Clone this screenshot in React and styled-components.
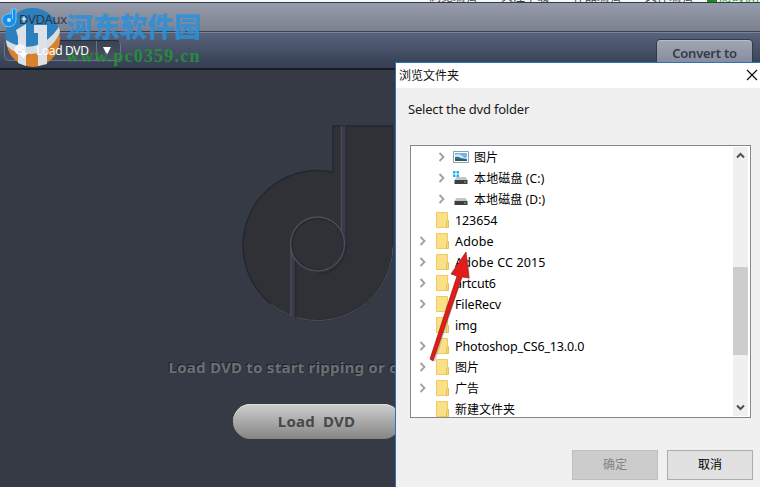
import React from "react";
import styled, { createGlobalStyle } from "styled-components";

const GlobalStyle = createGlobalStyle`
  * {
    box-sizing: border-box;
  }
  body {
    margin: 0;
    overflow: hidden;
    font-family: "Noto Sans", "Noto Sans CJK SC", sans-serif;
  }
`;

const Window = styled.div`
  position: relative;
  width: 760px;
  height: 487px;
  overflow: hidden;
  display: flex;
  flex-direction: column;
  background: #353a44;
`;

const TopStrip = styled.div`
  flex: none;
  display: flex;
  align-items: flex-end;
  gap: 24px;
  height: 2px;
  padding-left: 429px;
  overflow: hidden;
  background: #f4f8f9;
  color: #444;
  font-size: 12px;
  line-height: 14px;
  white-space: nowrap;
`;

const StripItem = styled.span`
  flex: none;
  width: 48px;
  margin-bottom: -2px;
`;

const StripMark = styled.span`
  flex: none;
  width: 60px;
  margin: 0 0 -2px -10px;
  padding-left: 12px;
  color: #12921a;
  background: linear-gradient(to right, #12921a 10px, transparent 10px);
`;

const TitleBar = styled.div`
  flex: none;
  display: flex;
  align-items: center;
  height: 29px;
  padding: 4px 0 0 19px;
  border-top: 1px solid #343a43;
  background: linear-gradient(#969cab, #7c818f);
  color: #252a34;
  font-size: 13px;
  line-height: 18px;
  letter-spacing: -0.3px;
`;

const TitleText = styled.span`
  position: relative;
  z-index: 1;
  opacity: 0.85;
`;

const Toolbar = styled.div`
  flex: none;
  display: flex;
  justify-content: space-between;
  align-items: flex-start;
  height: 39px;
  padding: 7px 7px 0 4px;
  border-top: 1px solid #3a4150;
  border-bottom: 2px solid #191c23;
  box-shadow: inset 0 1px #7a8498;
  background: linear-gradient(#59657d, #343d51);
`;

const LoadMenu = styled.div`
  display: flex;
  align-items: center;
  width: 117px;
  height: 21px;
  margin-top: 1px;
  border: 1px solid #697286;
  border-top-color: #252b38;
  border-radius: 5px;
  background: linear-gradient(#3b4252, #4a5264);
  color: #fff;
  font-size: 12px;
`;

const LoadLabel = styled.span`
  display: flex;
  align-items: center;
  gap: 8px;
  width: 92px;
  padding-left: 8px;
  line-height: 19px;
  letter-spacing: -0.35px;
  white-space: nowrap;
  border-right: 1px solid #697286;

  > * {
    position: relative;
    z-index: 1;
  }
`;

const DownMark = styled.span`
  margin-left: 6px;
  border: 4px solid transparent;
  border-top: 8px solid #fff;
  border-bottom: 0;
`;

const ConvertTab = styled.div`
  width: 97px;
  height: 30px;
  border: 1px solid #333b4b;
  border-radius: 4px 4px 0 0;
  background: linear-gradient(#a1a6b3, #80879a);
  box-shadow: inset 0 1px #b8bcc6;
  color: #343b4a;
  font-size: 13px;
  font-weight: 600;
  line-height: 27px;
  letter-spacing: -0.25px;
  text-align: center;
`;

const Stage = styled.div`
  flex: 1;
  display: flex;
  flex-direction: column;
  align-items: center;
  width: 633px;
  padding-top: 53px;
`;

const Hint = styled.div`
  margin-top: 32px;
  width: 296px;
  color: #6c6f74;
  font-size: 15px;
  font-weight: 700;
  line-height: 24px;
  letter-spacing: 0.25px;
  white-space: nowrap;
  text-shadow: -1px -1px #1d2026;
`;

const LoadButton = styled.div`
  width: 168px;
  height: 35px;
  margin-top: 25px;
  border-radius: 18px;
  background: linear-gradient(#cecece, #858585);
  box-shadow: inset 0 1px #dadada;
  color: #484848;
  font-size: 15px;
  font-weight: 700;
  line-height: 34px;
  letter-spacing: 0.2px;
  text-align: center;
  white-space: pre;
`;

const Watermark = styled.div`
  position: absolute;
  left: 5px;
  top: 8px;
  display: flex;
  gap: 4px;
`;

const WatermarkText = styled.div`
  display: flex;
  flex-direction: column;
  padding-top: 5px;
  white-space: nowrap;
`;

const SiteName = styled.span`
  color: #2b91dc;
  font-size: 27px;
  font-weight: 900;
  line-height: 27px;
  opacity: 0.85;
`;

const SiteUrl = styled.span`
  margin-top: 6px;
  color: #268c3c;
  font-family: "Liberation Serif", serif;
  font-size: 18px;
  font-weight: 700;
  line-height: 20px;
  letter-spacing: 1.2px;
`;

const AppLogo = styled.svg`
  position: absolute;
  left: 1px;
  top: 8px;
`;

const Dialog = styled.div`
  position: absolute;
  z-index: 2;
  left: 395px;
  top: 62px;
  width: 365px;
  height: 425px;
  display: flex;
  flex-direction: column;
  border-top: 1px solid #2b74b8;
  border-left: 1px solid #2b74b8;
  background: #f0f0f0;
  color: #1a1a1a;
`;

const DialogHead = styled.div`
  display: flex;
  justify-content: space-between;
  align-items: center;
  height: 25px;
  padding: 0 2px 2px 3px;
  background: #fff;
  color: #111;
  font-size: 12px;
`;

const Prompt = styled.div`
  margin: 11px 0 0 12px;
  font-size: 13px;
  line-height: 20px;
  letter-spacing: -0.2px;
`;

const Tree = styled.div`
  display: flex;
  width: 341px;
  height: 273px;
  margin: 26px 0 0 14px;
  border: 1px solid #828790;
  background: #fff;
`;

const Rows = styled.div`
  flex: 1;
  height: 271px;
  overflow: hidden;
`;

const Row = styled.div`
  display: flex;
  align-items: center;
  height: 21px;
  padding-left: ${(props) => (props.$nested ? 27 : 8)}px;
  color: #000;
`;

const Label = styled.span`
  padding-top: ${(props) => (props.$cjk ? 0 : 2)}px;
  font-size: ${(props) => (props.$cjk ? 12 : 12.5)}px;
  letter-spacing: ${(props) => props.$spacing || 0}px;
  white-space: nowrap;
`;

const ArrowCell = styled.span`
  display: flex;
  width: ${(props) => (props.$nested ? 15 : 17)}px;
`;

const IconCell = styled.span`
  display: flex;
  width: ${(props) => (props.$nested ? 21 : 19)}px;
`;

const ScrollBar = styled.div`
  display: flex;
  flex-direction: column;
  align-items: center;
  width: 15px;
  height: 269px;
  margin: 1px 2px 0 0;
  background: #f0f0f0;
`;

const ScrollStep = styled.div`
  display: flex;
  align-items: center;
  justify-content: center;
  width: 15px;
  height: 17px;
`;

const Thumb = styled.div`
  width: 15px;
  height: 88px;
  margin: 103px 0 auto;
  background: #cdcdcd;
`;

const Actions = styled.div`
  display: flex;
  justify-content: flex-end;
  gap: 9px;
  padding: 32px 7px 0 0;
`;

const DialogButton = styled.div`
  width: 86px;
  height: 30px;
  border: 1px solid ${(props) => (props.$disabled ? "#bfbfbf" : "#adadad")};
  background: ${(props) => (props.$disabled ? "#cccccc" : "#e1e1e1")};
  color: ${(props) => (props.$disabled ? "#838383" : "#000")};
  font-size: 12px;
  line-height: 27px;
  text-align: center;
`;

const Pointer = styled.svg`
  position: absolute;
  z-index: 3;
  left: 420px;
  top: 245px;
`;

const items = [
  { name: "图片", icon: "picture", nested: true, arrow: true, cjk: true },
  { name: "本地磁盘 (C:)", icon: "system", nested: true, arrow: true, cjk: true, spacing: 0.15 },
  { name: "本地磁盘 (D:)", icon: "disk", nested: true, arrow: true, cjk: true, spacing: 0.1 },
  { name: "123654", spacing: -0.1 },
  { name: "Adobe", arrow: true, spacing: 0.15 },
  { name: "Adobe CC 2015", arrow: true, spacing: 0.15 },
  { name: "artcut6", arrow: true, spacing: -0.2 },
  { name: "FileRecv", arrow: true, spacing: -0.15 },
  { name: "img", spacing: -0.2 },
  { name: "Photoshop_CS6_13.0.0", arrow: true, spacing: -0.15 },
  { name: "图片", arrow: true, cjk: true },
  { name: "广告", arrow: true, cjk: true },
  { name: "新建文件夹", cjk: true },
];

const Chevron = () => (
  <svg width="8" height="10" viewBox="0 0 8 10">
    <path d="M1.500 1l4 4-4 4" fill="none" stroke="#a0a0a0" strokeWidth="1.8" />
  </svg>
);

const Step = ({ down }) => (
  <svg width="9" height="7" viewBox="0 0 9 7">
    <path
      d={down ? "M1 1.500L4.500 5 8 1.500" : "M1 5.500L4.500 2 8 5.500"}
      fill="none"
      stroke="#505050"
      strokeWidth="2"
    />
  </svg>
);

const ItemIcon = ({ type }) => {
  if (type === "picture") {
    return (
      <svg width="16" height="14" viewBox="0 0 16 14">
        <path d="M.5 1.500h15v11H.5z" fill="#fff" stroke="#8ba0b5" />
        <path d="M2 3h12v8H2z" fill="#78b5e6" />
        <path d="M2 5q4-2 7 1t5 1v2H2z" fill="#d7edf5" />
        <path d="M2 7q3-1 6 1l6 1v2H2z" fill="#2f7291" />
        <path d="M2 9q6 0 12 1v1H2z" fill="#315c54" />
      </svg>
    );
  }
  if (type === "system" || type === "disk") {
    return (
      <svg width="16" height="16" viewBox="0 0 16 16">
        {type === "system" && (
          <path
            d="M0 1h2.500v2.500H0zM3.500 1H6v2.500H3.500zM0 4.500h2.500V7H0zM3.500 4.500H6V7H3.500z"
            fill="#16b4e8"
          />
        )}
        <path d="M3.500 7h9l2 3h-13z" fill="#c3c6c8" />
        <path d="M1.500 10h13v4h-13z" fill="#3c4043" />
        <path d="M11 11.500h2v1h-2z" fill="#5cd67b" />
      </svg>
    );
  }
  return (
    <svg width="14" height="16" viewBox="0 0 14 16">
      <path d="M.5.500h11v15H.5z" fill="#fbe08a" stroke="#efcb62" />
      <path d="M10.500 9.500l2-1v7h-2z" fill="#f9da78" stroke="#e5c05a" />
    </svg>
  );
};

const DiscNote = () => (
  <svg width="152" height="200" viewBox="0 0 152 200">
    <path
      d="M92 3h60v121A75 75 0 1 1 92 49z"
      fill="#303136"
      stroke="#222831"
      strokeWidth="1.500"
    />
    <path d="M30 181A75 75 0 0 0 152 124" fill="none" stroke="#50535b" />
    <path d="M105 3v119A28 28 0 0 1 77 151" fill="none" stroke="#242b35" strokeWidth="2" />
    <path d="M103 3v119" stroke="#363d48" strokeWidth="3" />
    <path d="M100.500 3v105" stroke="#4a4d56" strokeWidth="1.500" />
    <path d="M54.500 138v57" stroke="#242b35" strokeWidth="2" />
    <path d="M52 124v71" stroke="#363d48" strokeWidth="3" />
    <path d="M50 122v71" stroke="#4a4d56" strokeWidth="1.500" />
    <circle cx="77" cy="121.500" r="26" fill="#303136" stroke="#242b35" strokeWidth="2" />
    <circle cx="76.500" cy="121" r="27" fill="none" stroke="#4a4d56" strokeWidth="1.500" />
  </svg>
);

const SmallDisc = () => (
  <svg width="15" height="16" viewBox="0 0 15 16">
    <path
      d="M7 1a6 5.500 0 1 0 1 11v-2H5V8h4V6h4A6 5.500 0 0 0 7 1z"
      fill="#f3f5f8"
    />
    <path d="M9 7h3v3h3l-4.500 5L6 10h3z" fill="#fff" />
  </svg>
);

const SiteLogo = () => (
  <svg width="57" height="60" viewBox="0 0 57 60">
    <ellipse cx="28" cy="31" rx="27" ry="28" fill="#d9822e" />
    <path d="M1 34A27 28 0 0 1 54 22Q48 42 24 40 8 39 1 34z" fill="#2d80bd" />
    <path d="M1 32q14 9 28 6T54 19l1 5Q47 44 26 46 9 46 2 38z" fill="#d5dde5" />
    <path d="M11 22l10-6v42l-8-3V29zM29 17h13v39l-9 2V25h-4z" fill="#dce2e8" />
    <path d="M19 7l1 3 3 1-3 1-1 3-1-3-3-1 3-1z" fill="#c8dceb" />
  </svg>
);

const App = () => {
  return (
    <>
      <GlobalStyle />
      <Window>
        <TopStrip>
          <StripItem>浏览编辑</StripItem>
          <StripItem>关注下载</StripItem>
          <StripItem>作品编辑</StripItem>
          <StripItem>文件编辑</StripItem>
          <StripMark>测试软件</StripMark>
        </TopStrip>
        <TitleBar>
          <TitleText>DVDAux</TitleText>
        </TitleBar>
        <Toolbar>
          <LoadMenu>
            <LoadLabel>
              <SmallDisc />
              <span>Load DVD</span>
            </LoadLabel>
            <DownMark />
          </LoadMenu>
          <ConvertTab>Convert to</ConvertTab>
        </Toolbar>
        <Stage>
          <DiscNote />
          <Hint>Load DVD to start ripping or copying</Hint>
          <LoadButton>Load  DVD</LoadButton>
        </Stage>

        <Watermark>
          <SiteLogo />
          <WatermarkText>
            <SiteName>河东软件园</SiteName>
            <SiteUrl>www.pc0359.cn</SiteUrl>
          </WatermarkText>
        </Watermark>
        <AppLogo width="16" height="20" viewBox="0 0 16 20">
          <path
            d="M10 1h5v11a7 6.500 0 1 1-5-6z"
            fill="#168eea"
            stroke="#70c9ff"
          />
          <circle cx="8" cy="12" r="2" fill="#b9e6ff" />
          <path d="M11.500 2v9" stroke="#8bd6ff" />
        </AppLogo>

        <Dialog>
          <DialogHead>
            浏览文件夹
            <svg width="12" height="12" viewBox="0 0 12 12">
              <path d="M1 1l10 10M11 1L1 11" stroke="#111" strokeWidth="1.300" />
            </svg>
          </DialogHead>
          <Prompt>Select the dvd folder</Prompt>
          <Tree>
            <Rows>
              {items.map((item, index) => (
                <Row key={index} $nested={item.nested}>
                  <ArrowCell $nested={item.nested}>
                    {item.arrow && <Chevron />}
                  </ArrowCell>
                  <IconCell $nested={item.nested}>
                    <ItemIcon type={item.icon} />
                  </IconCell>
                  <Label $cjk={item.cjk} $spacing={item.spacing}>
                    {item.name}
                  </Label>
                </Row>
              ))}
            </Rows>
            <ScrollBar>
              <ScrollStep>
                <Step />
              </ScrollStep>
              <Thumb />
              <ScrollStep>
                <Step down />
              </ScrollStep>
            </ScrollBar>
          </Tree>
          <Actions>
            <DialogButton $disabled>确定</DialogButton>
            <DialogButton>取消</DialogButton>
          </Actions>
        </Dialog>

        <Pointer width="60" height="122" viewBox="0 0 60 122">
          <path
            d="M15 117l28-87 7 4-2-20-15 14 5 1-27 83z"
            fill="#777"
            opacity=".35"
          />
          <path
            d="M10 114l27-83-6-2L46 7l3 26-7-1-29 84z"
            fill="#e51b18"
            stroke="#8e2020"
            strokeWidth=".7"
          />
        </Pointer>
      </Window>
    </>
  );
};

export default App;
